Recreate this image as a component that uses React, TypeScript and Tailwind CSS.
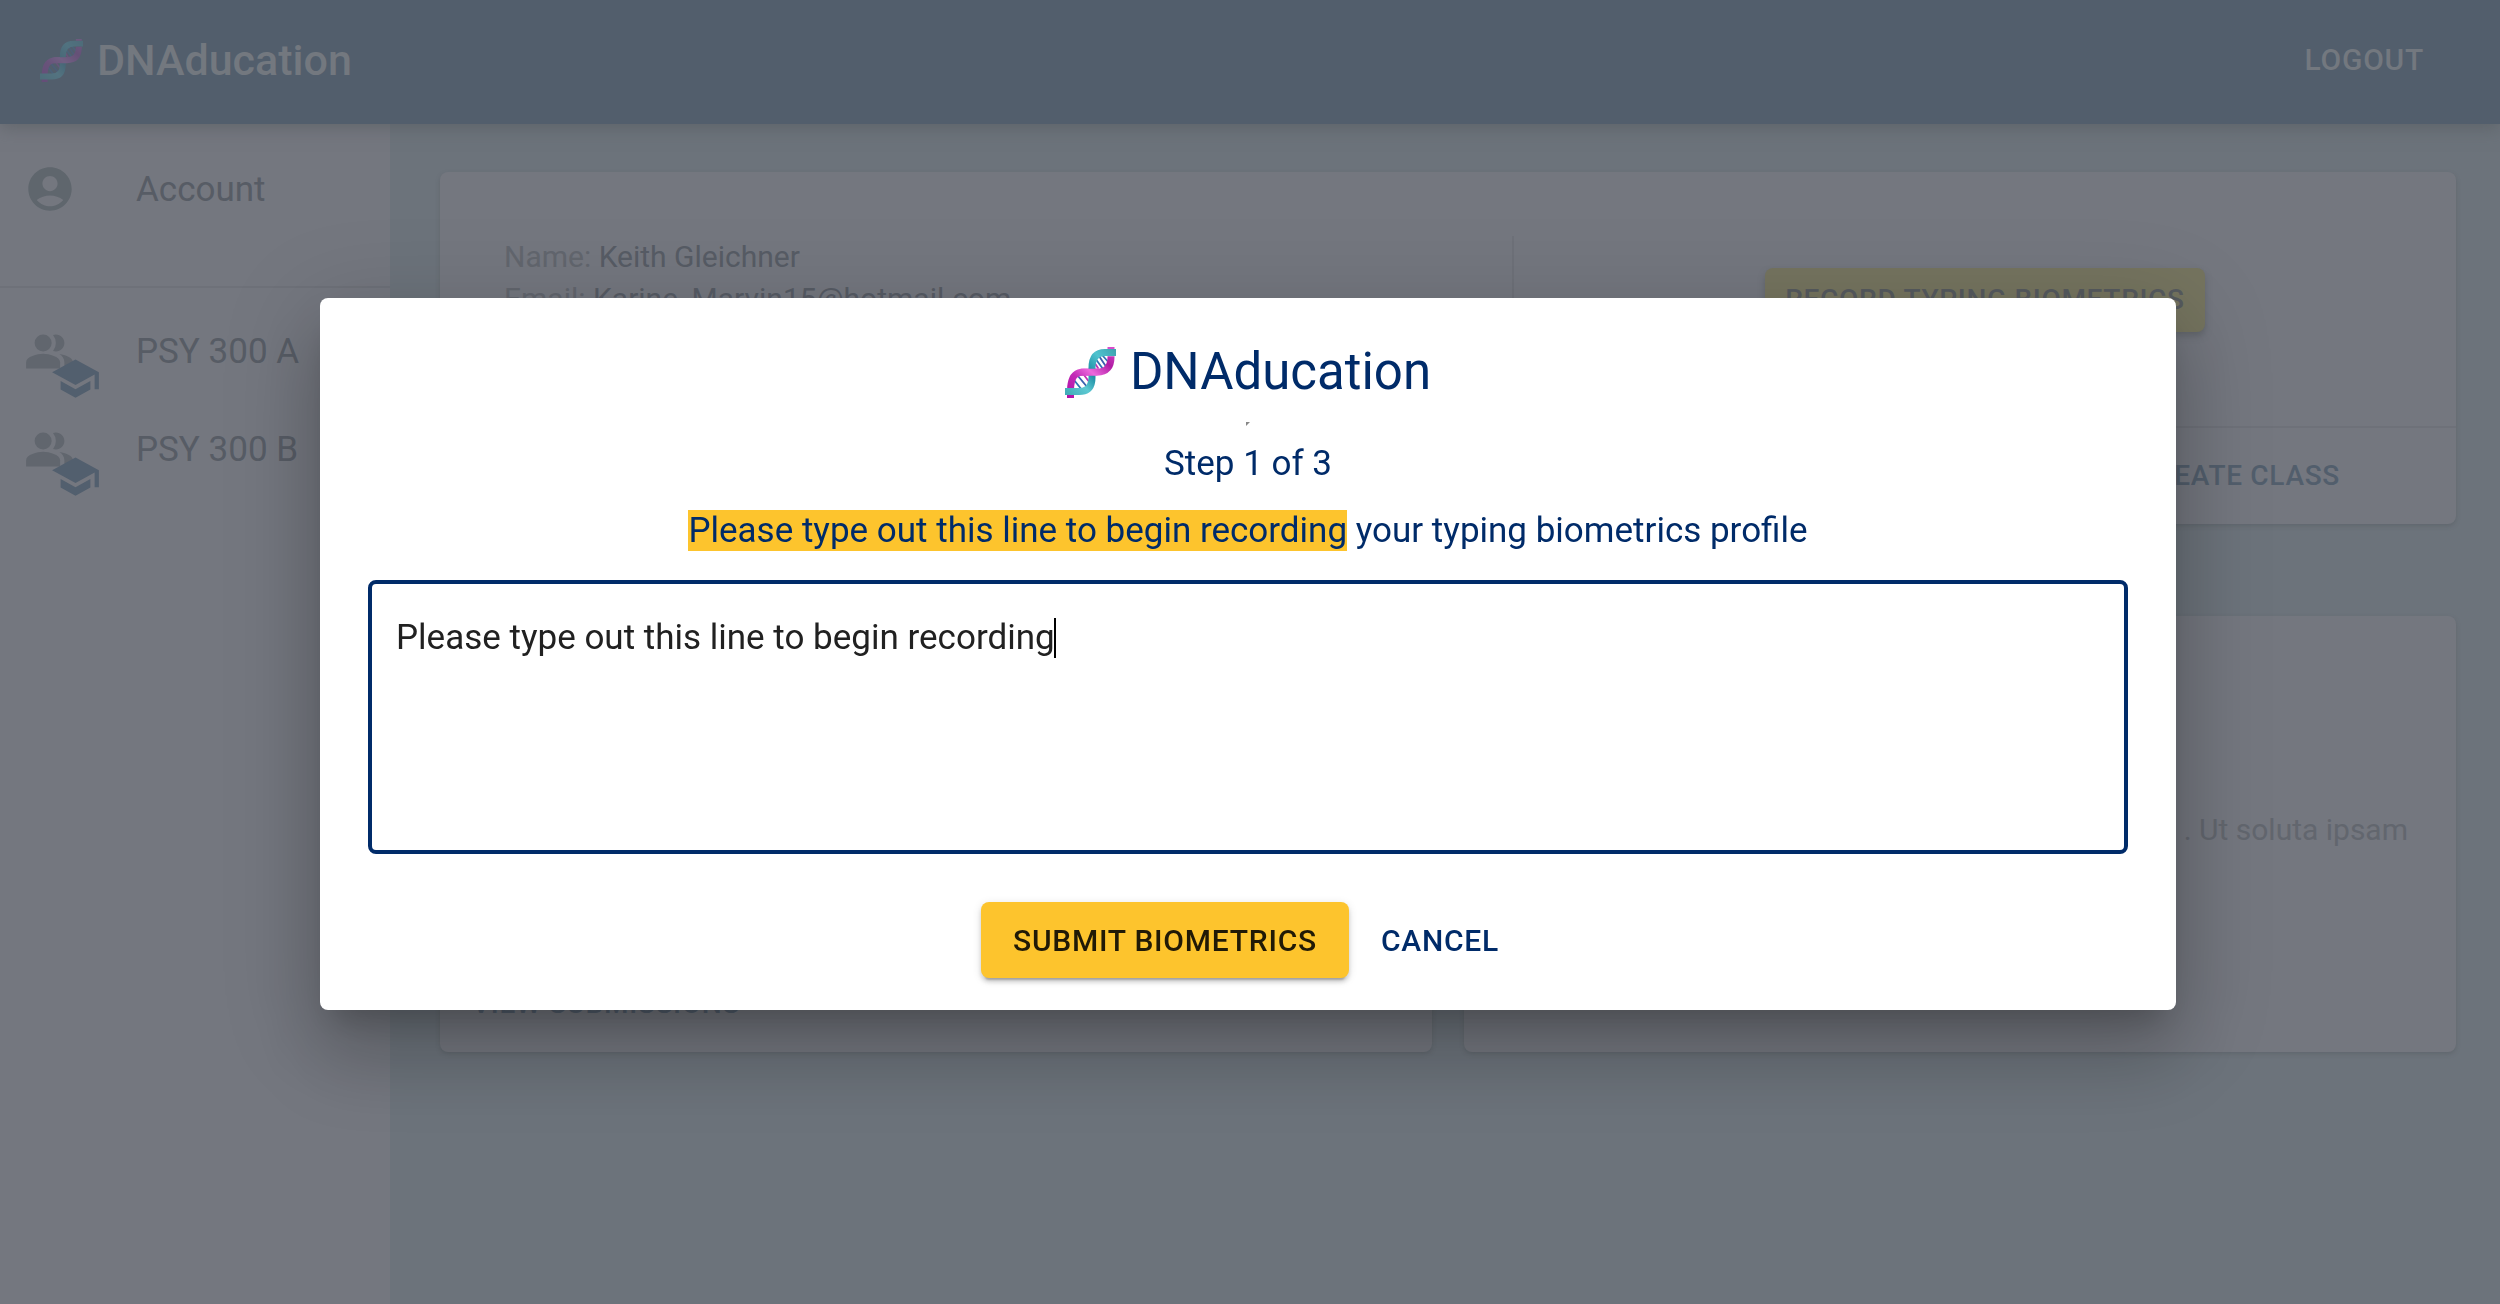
import { MdAccountCircle, MdPeopleAlt, MdSchool } from "react-icons/md";

function DnaIcon({ className }: { className: string }) {
  return (
    <svg viewBox="0 0 51 51" className={className} role="img" aria-label="DNA">
      <defs>
        <linearGradient id="pinkStrand" gradientUnits="userSpaceOnUse" x1="4" y1="51" x2="50" y2="0">
          <stop offset="0" stopColor="#b010a8" />
          <stop offset="0.3" stopColor="#c22ab6" />
          <stop offset="0.5" stopColor="#ec68dc" />
          <stop offset="0.75" stopColor="#b01ca4" />
          <stop offset="1" stopColor="#d84ccb" />
        </linearGradient>
        <linearGradient id="tealStrand" gradientUnits="userSpaceOnUse" x1="0" y1="48" x2="51" y2="4">
          <stop offset="0" stopColor="#3fa9b5" />
          <stop offset="0.3" stopColor="#5cc9d2" />
          <stop offset="0.5" stopColor="#1f8fa5" />
          <stop offset="0.75" stopColor="#4fc3cf" />
          <stop offset="1" stopColor="#3fa3b0" />
        </linearGradient>
      </defs>
      <g strokeWidth="1.8" strokeLinecap="round">
        <path d="M9 33l8 10M30 11l8 11M38 9l7 8" stroke="#2f72b4" />
        <path d="M13 29l10 12M34 9l8 12" stroke="#3a5fae" />
        <path d="M19 28l6 8M29 15l4 6" stroke="#c02fb6" />
      </g>
      <path d="M5.500 51V44C5.500 31 9 25 19 25h13" fill="none" stroke="url(#pinkStrand)" strokeWidth="7" />
      <path d="M0 44.500h14c9 0 13-5 13-14V21C27 11 31 5.500 40 5.500h11" fill="none" stroke="url(#tealStrand)" strokeWidth="7" />
      <path d="M16 25.200h16c10 0 14-6 14-15v-1" fill="none" stroke="url(#pinkStrand)" strokeWidth="7" />
      <path d="M42.500 2V0h7v2" fill="#d84ccb" />
    </svg>
  );
}

function ClassItem({ name }: { name: string }) {
  return (
    <li>
      <a href="#class" className="flex h-[98px] items-center pl-6">
        <span className="relative w-28 shrink-0">
          <MdPeopleAlt className="size-[51px] text-[#61666e]" />
          <MdSchool className="absolute top-[27px] left-[26px] size-[51px] text-[#525f6e]" />
        </span>
        {name}
      </a>
    </li>
  );
}

export default function App() {
  return (
    <div className="relative flex min-h-screen flex-col overflow-hidden bg-[#6c737b] font-[Roboto,sans-serif] text-[#575c65]">
      <header className="relative z-10 flex h-[124px] items-center justify-between bg-[#525e6c] pr-[76px] pb-1 pl-10 text-[#73787f] shadow-[0_4px_16px_rgba(80,85,90,0.5)]">
        <div className="flex items-center gap-3.5 text-[43px] leading-[60px] font-medium">
          <DnaIcon className="size-[43px] opacity-20" />
          DNAducation
        </div>
        <button type="button" className="text-[30px] leading-[52px] font-medium tracking-wide">LOGOUT</button>
      </header>

      <div className="flex grow">
        <nav className="w-[390px] shrink-0 bg-[#74777f] text-[35px] leading-[51px]">
          <div className="border-b-2 border-[#6e7179] pt-4 pb-12">
            <a href="#account" className="flex h-[98px] items-center pl-6">
              <span className="w-28 shrink-0">
                <MdAccountCircle className="size-[52px] text-[#5f666d]" />
              </span>
              Account
            </a>
          </div>
          <ul className="pt-3.5">
            <ClassItem name="PSY 300 A" />
            <ClassItem name="PSY 300 B" />
          </ul>
        </nav>

        <main className="flex grow flex-col gap-[92px] pt-12 pr-11 pl-[50px]">
          <section className="flex h-[352px] flex-col rounded-lg bg-[#74777f] shadow-[0_2px_4px_rgba(80,85,90,0.4)]">
            <div className="grid grow grid-cols-[1074px_1fr]">
              <div className="mt-16 border-r-2 border-[#6e7179] pl-16 text-[30px] leading-[42px]">
                <p><span className="text-[#62666e]">Name:</span> Keith Gleichner</p>
                <p><span className="text-[#62666e]">Email:</span> Karine_Marvin15@hotmail.com</p>
              </div>
              <div className="flex items-start justify-center pt-24">
                <button type="button" className="h-16 rounded-lg bg-[#75745f] px-5 text-[28px] font-medium tracking-wide text-[#565a5e] shadow-[0_4px_6px_rgba(80,85,90,0.5)]">
                  RECORD TYPING BIOMETRICS
                </button>
              </div>
            </div>
            <div className="flex h-[98px] items-center justify-end border-t-2 border-[#6e7179] pr-[116px]">
              <button type="button" className="text-[28px] font-medium tracking-wide text-[#525e6c]">CREATE CLASS</button>
            </div>
          </section>

          <div className="grid grid-cols-2 gap-8">
            <section className="flex h-[436px] items-end rounded-lg bg-[#74777f] pb-8 pl-8 shadow-[0_2px_4px_rgba(80,85,90,0.4)]">
              <button type="button" className="text-[28px] leading-8 font-medium tracking-wide text-[#525e6c]">VIEW SUBMISSIONS</button>
            </section>
            <section className="flex h-[436px] items-center justify-end rounded-lg bg-[#74777f] pr-12 pb-2 shadow-[0_2px_4px_rgba(80,85,90,0.4)]">
              <p className="text-[30px] leading-[42px] text-[#62666e]">. Ut soluta ipsam</p>
            </section>
          </div>
        </main>
      </div>

      <div className="fixed inset-0 z-20 flex items-center justify-center pt-1 pr-1">
        <div
          role="dialog"
          aria-modal="true"
          aria-labelledby="dialog-title"
          className="flex w-[1856px] max-w-full flex-col items-center rounded-lg bg-white px-12 pt-10 pb-8 text-[35px] leading-[51px] text-[#002b69] shadow-[0_22px_30px_-14px_rgba(0,0,0,0.2),0_48px_76px_6px_rgba(0,0,0,0.14),0_18px_92px_16px_rgba(0,0,0,0.12)]"
        >
          <h1 id="dialog-title" className="flex items-center gap-3.5 text-[51px] leading-[68px]">
            <DnaIcon className="size-[51px]" />
            DNAducation
          </h1>
          <svg viewBox="0 0 4 4" className="mt-4 size-1" aria-hidden="true">
            <path d="M0 0h4L0 4z" fill="#888" />
          </svg>
          <p className="mt-3">Step 1 of 3</p>
          <label htmlFor="sample" className="mt-4">
            <mark className="bg-[#fdc42d] text-inherit">Please type out this line to begin recording</mark>{" "}
            your typing biometrics profile
          </label>
          <div className="relative mt-6 w-full">
            <textarea
              id="sample"
              defaultValue="Please type out this line to begin recording"
              className="block h-[274px] w-full resize-none rounded-lg border-4 border-[#002b69] px-6 py-[34px] leading-10 text-[#212121] outline-none"
            />
            <span className="absolute top-[38px] left-[686px] h-10 w-0.5 bg-black" />
          </div>
          <div className="mt-12 flex items-center gap-8 pr-4 text-[30px] font-medium tracking-wide">
            <button type="button" className="h-[76px] rounded-lg bg-[#fdc42d] px-8 tracking-wide text-[#211a06] shadow-[0_6px_2px_-4px_rgba(0,0,0,0.2),0_4px_4px_rgba(0,0,0,0.14),0_2px_10px_rgba(0,0,0,0.12)]">
              SUBMIT BIOMETRICS
            </button>
            <button type="button" className="tracking-wide">CANCEL</button>
          </div>
        </div>
      </div>
    </div>
  );
}
